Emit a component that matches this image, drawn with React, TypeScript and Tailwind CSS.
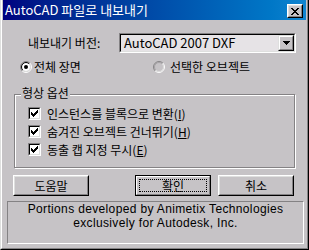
import React from 'react';

const ko = "font-['Noto_Sans_CJK_KR','Liberation_Sans',sans-serif] text-[12px] text-black";

const CheckMark = () => (
  <svg width="7" height="7" viewBox="0 0 7 7" shapeRendering="crispEdges">
    <path
      d="M6 0h1v3h-1zM5 1h1v3h-1zM4 2h1v3h-1zM0 2h1v3h-1zM1 3h1v3h-1zM2 4h1v3h-1zM3 3h1v3h-1z"
      fill="#000"
    />
  </svg>
);

const CheckRow = ({ children }: { children: React.ReactNode }) => (
  <div className="flex h-[13px] items-center">
    <div className="h-[13px] w-[13px] border border-t-[#848284] border-l-[#848284] border-r-white border-b-white">
      <div className="flex h-full w-full items-center justify-center border border-t-black border-l-black border-r-[#dedfde] border-b-[#dedfde] bg-white">
        <CheckMark />
      </div>
    </div>
    <span className={`${ko} ml-[6px] leading-[13px] whitespace-nowrap`}>{children}</span>
  </div>
);

const Radio = ({ checked, disabled }: { checked?: boolean; disabled?: boolean }) => (
  <svg width="12" height="12" viewBox="0 0 12 12" className="shrink-0">
    <circle cx="6" cy="6" r="4" fill={disabled ? '#c6c3c6' : '#fff'} />
    <path d="M2.111 9.889A5.5 5.5 0 0 1 9.889 2.111" fill="none" stroke="#848284" />
    <path d="M9.889 2.111A5.5 5.5 0 0 1 2.111 9.889" fill="none" stroke="#fff" />
    <path d="M2.818 9.182A4.5 4.5 0 0 1 9.182 2.818" fill="none" stroke={disabled ? '#a5a2a5' : '#000'} />
    <path d="M9.182 2.818A4.5 4.5 0 0 1 2.818 9.182" fill="none" stroke="#dedfde" />
    {checked && <circle cx="6" cy="6" r="2" fill="#000" />}
  </svg>
);

const Button = ({ children }: { children: React.ReactNode }) => (
  <div className="h-[21px] w-[76px] border border-t-white border-l-white border-r-black border-b-black">
    <div className={`${ko} flex h-full items-center justify-center border border-t-[#dedfde] border-l-[#dedfde] border-r-[#848284] border-b-[#848284]`}>
      {children}
    </div>
  </div>
);

const App = () => {
  return (
    <div className="h-[250px] w-[309px] border-r border-b border-l border-l-[#dedfde] border-r-black border-b-black bg-[#c6c3c6]">
      <div className="flex h-full flex-col border-r border-b border-l border-l-white border-r-[#848284] border-b-[#848284] px-px pb-px">
        {/* title bar */}
        <div className="flex h-[20px] shrink-0 items-start justify-between bg-linear-to-r from-[#000080] to-[#1084d0] pr-[3px] pl-[2px]">
          <span className="font-['Noto_Sans_CJK_KR','Liberation_Sans',sans-serif] text-[13px] leading-[20px] text-white">
            AutoCAD 파일로 내보내기
          </span>
          <div className="mt-[4px] h-[14px] w-[16px] border border-t-white border-l-white border-r-black border-b-black">
            <div className="flex h-full items-center justify-center border border-t-[#dedfde] border-l-[#dedfde] border-r-[#848284] border-b-[#848284] bg-[#c6c3c6]">
              <svg width="8" height="7" viewBox="0 0 8 7" shapeRendering="crispEdges">
                <path
                  d="M0 0h2v1h-2zM6 0h2v1h-2zM1 1h2v1h-2zM5 1h2v1h-2zM2 2h4v1h-4zM3 3h2v1h-2zM2 4h4v1h-4zM1 5h2v1h-2zM5 5h2v1h-2zM0 6h2v1h-2zM6 6h2v1h-2z"
                  fill="#000"
                />
              </svg>
            </div>
          </div>
        </div>

        {/* export version */}
        <div className="mt-[13px] flex items-center pl-[25px]">
          <span className={`${ko} w-[91px] leading-[20px]`}>내보내기 버전:</span>
          <div className="h-[20px] w-[177px] border border-t-[#848284] border-l-[#848284] border-r-white border-b-white">
            <div className="flex h-full items-center border border-t-black border-l-black border-r-[#dedfde] border-b-[#dedfde] bg-[#e6e3e6]">
              <span className="flex-1 pl-[3px] font-['Noto_Sans_CJK_KR','Liberation_Sans',sans-serif] text-[13px] leading-[16px] text-black">
                AutoCAD 2007 DXF
              </span>
              <div className="h-[16px] w-[16px] border border-t-[#dedfde] border-l-[#dedfde] border-r-black border-b-black">
                <div className="flex h-full items-center justify-center border border-t-white border-l-white border-r-[#848284] border-b-[#848284] bg-[#c6c3c6]">
                  <svg width="7" height="4" viewBox="0 0 7 4" shapeRendering="crispEdges">
                    <path d="M0 0h7v1h-7zM1 1h5v1h-5zM2 2h3v1h-3zM3 3h1v1h-1z" fill="#000" />
                  </svg>
                </div>
              </div>
            </div>
          </div>
        </div>

        {/* scope */}
        <div className="mt-[6px] flex h-[16px] items-center pl-[17px]">
          <div className="flex w-[133px] items-center">
            <Radio checked />
            <span className={`${ko} ml-[2px] leading-[16px]`}>전체 장면</span>
          </div>
          <Radio disabled />
          <span className={`${ko} ml-[5px] leading-[16px]`}>선택한 오브젝트</span>
        </div>

        {/* geometry options */}
        <div className="relative mt-[19px] ml-[11px] h-[74px] w-[281px] shrink-0 border border-[#848284] shadow-[inset_1px_1px_0_white,1px_1px_0_white]">
          <span className={`${ko} absolute top-[-9px] left-[6px] bg-[#c6c3c6] px-[1px] leading-[14px]`}>
            형상 옵션
          </span>
          <div className="flex flex-col gap-[5px] pt-[12px] pl-[13px]">
            <CheckRow>
              인스턴스를 블록으로 변환(<span className="underline">I</span>)
            </CheckRow>
            <CheckRow>
              숨겨진 오브젝트 건너뛰기(<span className="underline">H</span>)
            </CheckRow>
            <CheckRow>
              동출 캡 지정 무시(<span className="underline">E</span>)
            </CheckRow>
          </div>
        </div>

        {/* buttons */}
        <div className="mt-[7px] flex pl-[10px]">
          <Button>도움말</Button>
          <div className="ml-[46px] h-[21px] w-[76px] border border-black">
            <div className="h-full border border-t-white border-l-white border-r-[#848284] border-b-[#848284] p-[2px]">
              <div className={`${ko} flex h-full items-center justify-center border border-dotted border-black`}>
                확인
              </div>
            </div>
          </div>
          <div className="ml-[7px]">
            <Button>취소</Button>
          </div>
        </div>

        {/* credits */}
        <div className="mt-[5px] ml-[4px] h-[43px] w-[297px] border border-t-[#848284] border-l-[#848284] border-r-white border-b-white text-center font-['Liberation_Sans',sans-serif] text-[12px] leading-[14px] tracking-[0.35px] text-black">
          <div>Portions developed by Animetix Technologies</div>
          <div>exclusively for Autodesk, Inc.</div>
        </div>
      </div>
    </div>
  );
};

export default App;
